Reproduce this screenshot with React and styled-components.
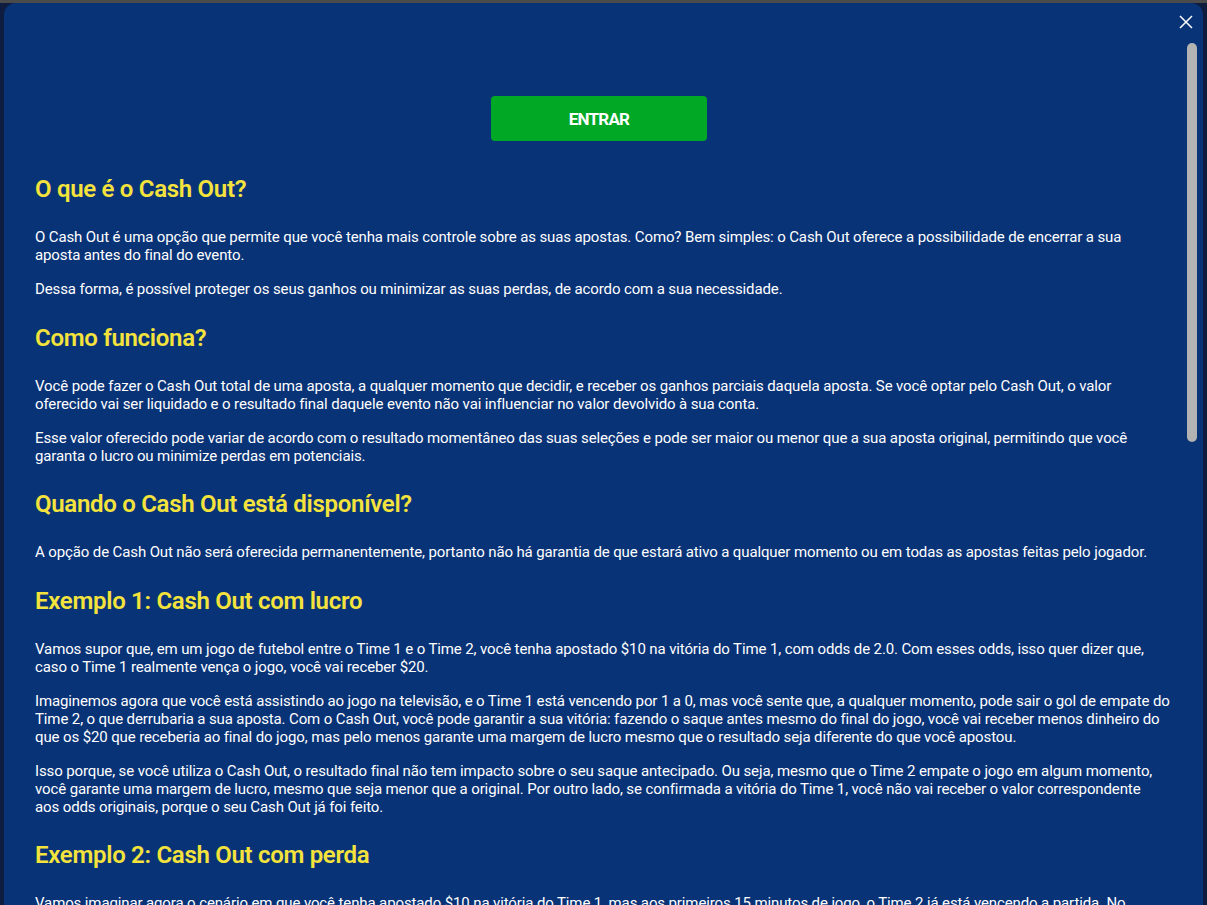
import React from 'react';
import styled, { createGlobalStyle } from 'styled-components';

const GlobalStyle = createGlobalStyle`
  html, body {
    margin: 0;
    padding: 0;
    height: 100%;
    overflow: hidden;
  }
  body {
    background: #0e1c40;
    font-family: Roboto, "Liberation Sans", sans-serif;
  }
`;

const Page = styled.div`
  height: 905px;
  border-top: 3px solid #4b4b4b;
  box-sizing: border-box;
  padding: 0 4px 0 4px;
  overflow: hidden;
`;

const Modal = styled.div`
  position: relative;
  background: #093377;
  border-radius: 12px 12px 0 0;
  height: 1000px;
  display: flex;
  flex-direction: column;
  padding: 93px 38px 0 31px;
  box-sizing: border-box;
`;

const CloseButton = styled.button`
  position: absolute;
  top: 9px;
  right: 7px;
  width: 20px;
  height: 20px;
  padding: 0;
  border: 0;
  background: transparent;
  display: flex;
  align-items: center;
  justify-content: center;
  cursor: pointer;
`;

const ScrollThumb = styled.div`
  position: absolute;
  top: 40px;
  right: 6px;
  width: 10px;
  height: 399px;
  border-radius: 5px;
  background: #b3b3b3;
`;

const ButtonRow = styled.div`
  display: flex;
  justify-content: center;
  padding-right: 2px;
  margin-bottom: 34px;
`;

const EnterButton = styled.button`
  width: 216px;
  height: 45px;
  border: 0;
  border-radius: 4px;
  background: #00a826;
  color: #ffffff;
  font-family: Roboto, "Liberation Sans", sans-serif;
  font-weight: 700;
  font-size: 17px;
  letter-spacing: -0.8px;
  cursor: pointer;
`;

const Heading = styled.h2`
  margin: 0 0 24px;
  color: #f4e33c;
  font-size: 24px;
  line-height: 29px;
  font-weight: 600;
  letter-spacing: -0.3px;
`;

const Paragraph = styled.p`
  margin: 0 0 16px;
  color: #ffffff;
  font-size: 15px;
  line-height: 18px;
  letter-spacing: -0.12px;
  white-space: nowrap;

  & + h2 {
    margin-top: 9.5px;
  }
`;

const sections = [
  {
    title: 'O que é o Cash Out?',
    paragraphs: [
      [
        'O Cash Out é uma opção que permite que você tenha mais controle sobre as suas apostas. Como? Bem simples: o Cash Out oferece a possibilidade de encerrar a sua',
        'aposta antes do final do evento.',
      ],
      ['Dessa forma, é possível proteger os seus ganhos ou minimizar as suas perdas, de acordo com a sua necessidade.'],
    ],
  },
  {
    title: 'Como funciona?',
    paragraphs: [
      [
        'Você pode fazer o Cash Out total de uma aposta, a qualquer momento que decidir, e receber os ganhos parciais daquela aposta. Se você optar pelo Cash Out, o valor',
        'oferecido vai ser liquidado e o resultado final daquele evento não vai influenciar no valor devolvido à sua conta.',
      ],
      [
        'Esse valor oferecido pode variar de acordo com o resultado momentâneo das suas seleções e pode ser maior ou menor que a sua aposta original, permitindo que você',
        'garanta o lucro ou minimize perdas em potenciais.',
      ],
    ],
  },
  {
    title: 'Quando o Cash Out está disponível?',
    paragraphs: [
      ['A opção de Cash Out não será oferecida permanentemente, portanto não há garantia de que estará ativo a qualquer momento ou em todas as apostas feitas pelo jogador.'],
    ],
  },
  {
    title: 'Exemplo 1: Cash Out com lucro',
    paragraphs: [
      [
        'Vamos supor que, em um jogo de futebol entre o Time 1 e o Time 2, você tenha apostado $10 na vitória do Time 1, com odds de 2.0. Com esses odds, isso quer dizer que,',
        'caso o Time 1 realmente vença o jogo, você vai receber $20.',
      ],
      [
        'Imaginemos agora que você está assistindo ao jogo na televisão, e o Time 1 está vencendo por 1 a 0, mas você sente que, a qualquer momento, pode sair o gol de empate do',
        'Time 2, o que derrubaria a sua aposta. Com o Cash Out, você pode garantir a sua vitória: fazendo o saque antes mesmo do final do jogo, você vai receber menos dinheiro do',
        'que os $20 que receberia ao final do jogo, mas pelo menos garante uma margem de lucro mesmo que o resultado seja diferente do que você apostou.',
      ],
      [
        'Isso porque, se você utiliza o Cash Out, o resultado final não tem impacto sobre o seu saque antecipado. Ou seja, mesmo que o Time 2 empate o jogo em algum momento,',
        'você garante uma margem de lucro, mesmo que seja menor que a original. Por outro lado, se confirmada a vitória do Time 1, você não vai receber o valor correspondente',
        'aos odds originais, porque o seu Cash Out já foi feito.',
      ],
    ],
  },
  {
    title: 'Exemplo 2: Cash Out com perda',
    paragraphs: [
      [
        'Vamos imaginar agora o cenário em que você tenha apostado $10 na vitória do Time 1, mas aos primeiros 15 minutos de jogo, o Time 2 já está vencendo a partida. No',
        'entanto, você ainda acredita na virada, mas prefere não arriscar todo o valor apostado.',
      ],
    ],
  },
];

export default function App() {
  return (
    <>
      <GlobalStyle />
      <Page>
        <Modal>
          <CloseButton aria-label="Fechar">
            <svg width="14" height="14" viewBox="0 0 14 14">
              <path d="M1 1 L13 13 M13 1 L1 13" stroke="#ffffff" strokeWidth="1.5" fill="none" />
            </svg>
          </CloseButton>
          <ScrollThumb />
          <ButtonRow>
            <EnterButton>ENTRAR</EnterButton>
          </ButtonRow>
          {sections.map((s) => (
            <React.Fragment key={s.title}>
              <Heading>{s.title}</Heading>
              {s.paragraphs.map((lines, i) => (
                <Paragraph key={i}>
                  {lines.map((line, j) => (
                    <React.Fragment key={j}>
                      {j > 0 && <br />}
                      {line}
                    </React.Fragment>
                  ))}
                </Paragraph>
              ))}
            </React.Fragment>
          ))}
        </Modal>
      </Page>
    </>
  );
}
